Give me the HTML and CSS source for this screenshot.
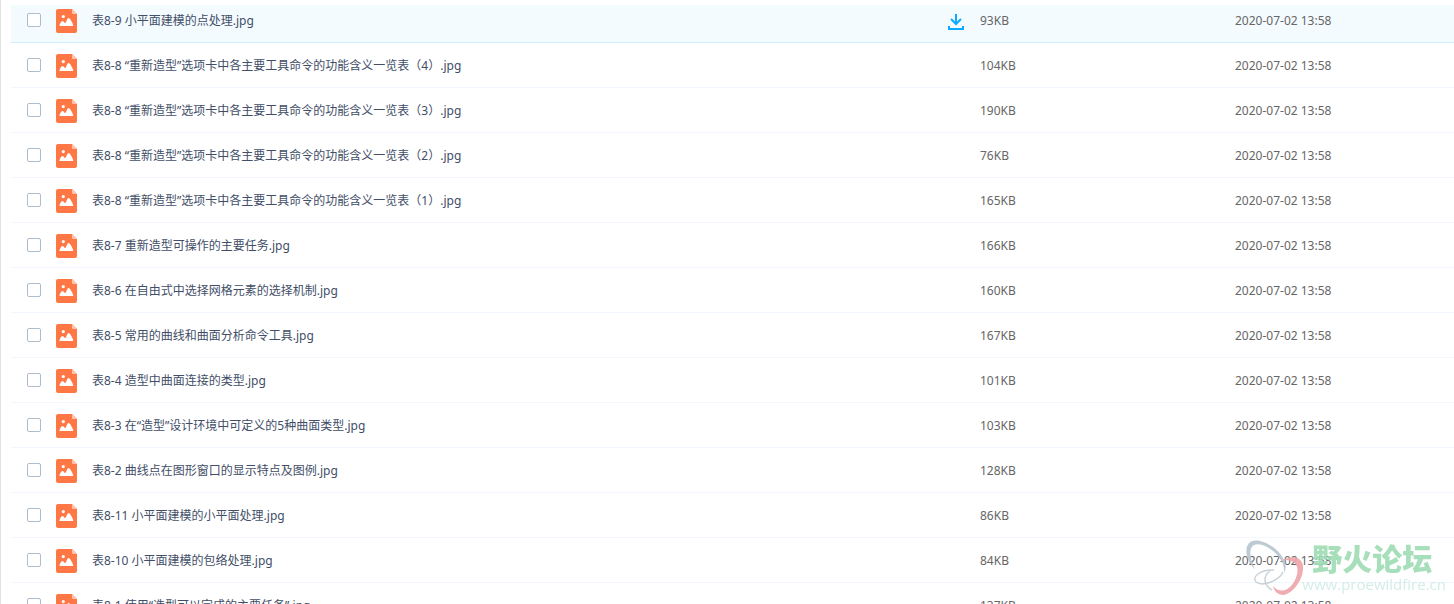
FILE: index.html
```
<!DOCTYPE html>
<html lang="zh-CN">
<head>
    <meta charset="UTF-8">
    <meta name="viewport" content="width=device-width, initial-scale=1.0">
    <title>文件列表</title>
    <link rel="stylesheet" href="styles.css">
</head>
<body>
    <!-- Shared icons -->
    <svg class="icon-defs" aria-hidden="true">
        <symbol id="icon-image" viewBox="0 0 21 24">
            <path fill="#ff7744" d="M2 0h14l5 5v17a2 2 0 0 1-2 2H2a2 2 0 0 1-2-2V2a2 2 0 0 1 2-2z"/>
            <path fill="#ffc5ae" d="M16 0l5 5h-4a1 1 0 0 1-1-1z"/>
            <circle fill="#fff" cx="7.300" cy="7.600" r="1.600"/>
            <path fill="#fff" d="M3.500 17c0-1.500 1.500-5 3-5 1 0 1.800 2 2.700 2s2-5 3.300-5c1.500 0 4.500 5 4.800 8z"/>
        </symbol>
        <symbol id="icon-download" viewBox="0 0 16 16">
            <path fill="none" stroke="#09aaff" stroke-width="2" d="M8 0v9M3 5l5 5 5-5"/>
            <path fill="none" stroke="#09aaff" stroke-width="2" d="M1 12v3h14v-3"/>
        </symbol>
    </svg>

    <main class="file-list">
        <table class="file-table" aria-label="文件列表">
            <colgroup>
                <col class="col-name">
                <col class="col-size">
                <col class="col-date">
            </colgroup>
            <tbody id="file-rows"></tbody>
        </table>
    </main>

    <div class="watermark">
        <svg class="watermark-logo" viewBox="0 0 60 56" aria-hidden="true">
            <path fill="#b5c5cf" d="M9 29C0 22-3 6 5 1.500 14-3 34 8 39 22c1 4 1 7-1 11 0-4 0-7-2-11C30 10 15 2 8 5 2 8 4 20 9 29z"/>
            <path fill="none" stroke="#c3ccd2" stroke-width="1.500" d="M37 32c-4 9-21 15-27 10-5-5 5-13 18-12M24 31c-7 5-7 14 2 19"/>
            <path fill="#efa5a9" d="M37 20c10-5 19-3 20 6 1 13-10 28-20 29-5 0-9-4-10-9 5 6 12 6 18 0 8-9 12-27-8-26z"/>
        </svg>
        <div class="watermark-text">
            <span class="watermark-title">野火论坛</span>
            <span class="watermark-url">www.proewildfire.cn</span>
        </div>
    </div>

    <script src="files.js"></script>
</body>
</html>
```
FILE: styles.css
```
body {
    margin: 0;
    height: 100vh;
    overflow: hidden;
    box-sizing: border-box;
    padding: 5px 0 0 10px;
    border-left: 1px solid #e2e2e2;
    background-color: #fff;
    font-family: "Noto Sans", "Noto Sans CJK SC", sans-serif;
    font-size: 12px;
    color: #666;
}

.icon-defs {
    position: absolute;
    width: 0;
    height: 0;
}

.file-list {
    height: 100%;
    overflow: hidden;
}

/* The list is scrolled, so the first row is partly hidden */
.file-table {
    width: 100%;
    margin-top: -7px;
    table-layout: fixed;
    border-collapse: separate;
    border-spacing: 0;
}

.col-size {
    width: 255px;
}

.col-date {
    width: 219px;
}

.file-table td {
    height: 42px;
    padding: 2px 0 0;
    border-bottom: 1px solid #f2f6fd;
    line-height: 18px;
    white-space: nowrap;
}

.file-table .active td {
    background-color: #f4fbff;
    border-bottom-color: #cbedff;
}

.name-cell {
    display: flex;
    align-items: center;
    padding: 0 16px;
}

.name-cell input {
    appearance: none;
    box-sizing: border-box;
    width: 14px;
    height: 14px;
    margin: 0 15px 2px 0;
    border: 1px solid #aebdcc;
    border-radius: 2px;
    background-color: #fff;
}

.name-cell input:checked {
    background-color: #09aaff;
}

.file-icon {
    width: 21px;
    height: 24px;
    margin-right: 15px;
}

.file-name {
    flex: 1;
    overflow: hidden;
    text-overflow: ellipsis;
    color: #424e67;
}

.download {
    display: flex;
    padding: 2px 0 0;
    border: none;
    background: none;
    cursor: pointer;
}

.download svg {
    width: 16px;
    height: 16px;
}

/* Forum watermark over the bottom right corner */
.watermark {
    position: fixed;
    right: 8px;
    bottom: 8px;
    display: flex;
    align-items: center;
    pointer-events: none;
    opacity: 0.9;
}

.watermark-logo {
    width: 60px;
    height: 56px;
    margin-right: -4px;
}

.watermark-text {
    display: flex;
    flex-direction: column;
}

.watermark-title {
    padding-left: 10px;
    font-family: "Noto Sans CJK SC", sans-serif;
    font-size: 30px;
    font-weight: 900;
    line-height: 32px;
    color: #9edcb4;
}

.watermark-url {
    font-family: "Open Sans", sans-serif;
    font-size: 15px;
    line-height: 22px;
    color: #cfebe5;
}
```
FILE: files.js
```
const files = [
    ['表8-9 小平面建模的点处理.jpg', '93KB'],
    ['表8-8 “重新造型”选项卡中各主要工具命令的功能含义一览表（4）.jpg', '104KB'],
    ['表8-8 “重新造型”选项卡中各主要工具命令的功能含义一览表（3）.jpg', '190KB'],
    ['表8-8 “重新造型”选项卡中各主要工具命令的功能含义一览表（2）.jpg', '76KB'],
    ['表8-8 “重新造型”选项卡中各主要工具命令的功能含义一览表（1）.jpg', '165KB'],
    ['表8-7 重新造型可操作的主要任务.jpg', '166KB'],
    ['表8-6 在自由式中选择网格元素的选择机制.jpg', '160KB'],
    ['表8-5 常用的曲线和曲面分析命令工具.jpg', '167KB'],
    ['表8-4 造型中曲面连接的类型.jpg', '101KB'],
    ['表8-3 在“造型”设计环境中可定义的5种曲面类型.jpg', '103KB'],
    ['表8-2 曲线点在图形窗口的显示特点及图例.jpg', '128KB'],
    ['表8-11 小平面建模的小平面处理.jpg', '86KB'],
    ['表8-10 小平面建模的包络处理.jpg', '84KB'],
    ['表8-1 使用“造型可以完成的主要任务”.jpg', '137KB']
];

const downloadButton = '<button class="download" aria-label="下载"><svg><use href="#icon-download"/></svg></button>';

// The first row is the hovered one, it shows the download button
document.getElementById('file-rows').innerHTML = files.map(([name, size], i) => `
    <tr class="${i === 0 ? 'active' : ''}">
        <td>
            <div class="name-cell">
                <input type="checkbox" id="file-${i}">
                <svg class="file-icon"><use href="#icon-image"/></svg>
                <label class="file-name" for="file-${i}">${name}</label>
                ${i === 0 ? downloadButton : ''}
            </div>
        </td>
        <td>${size}</td>
        <td>2020-07-02 13:58</td>
    </tr>`).join('');
```
